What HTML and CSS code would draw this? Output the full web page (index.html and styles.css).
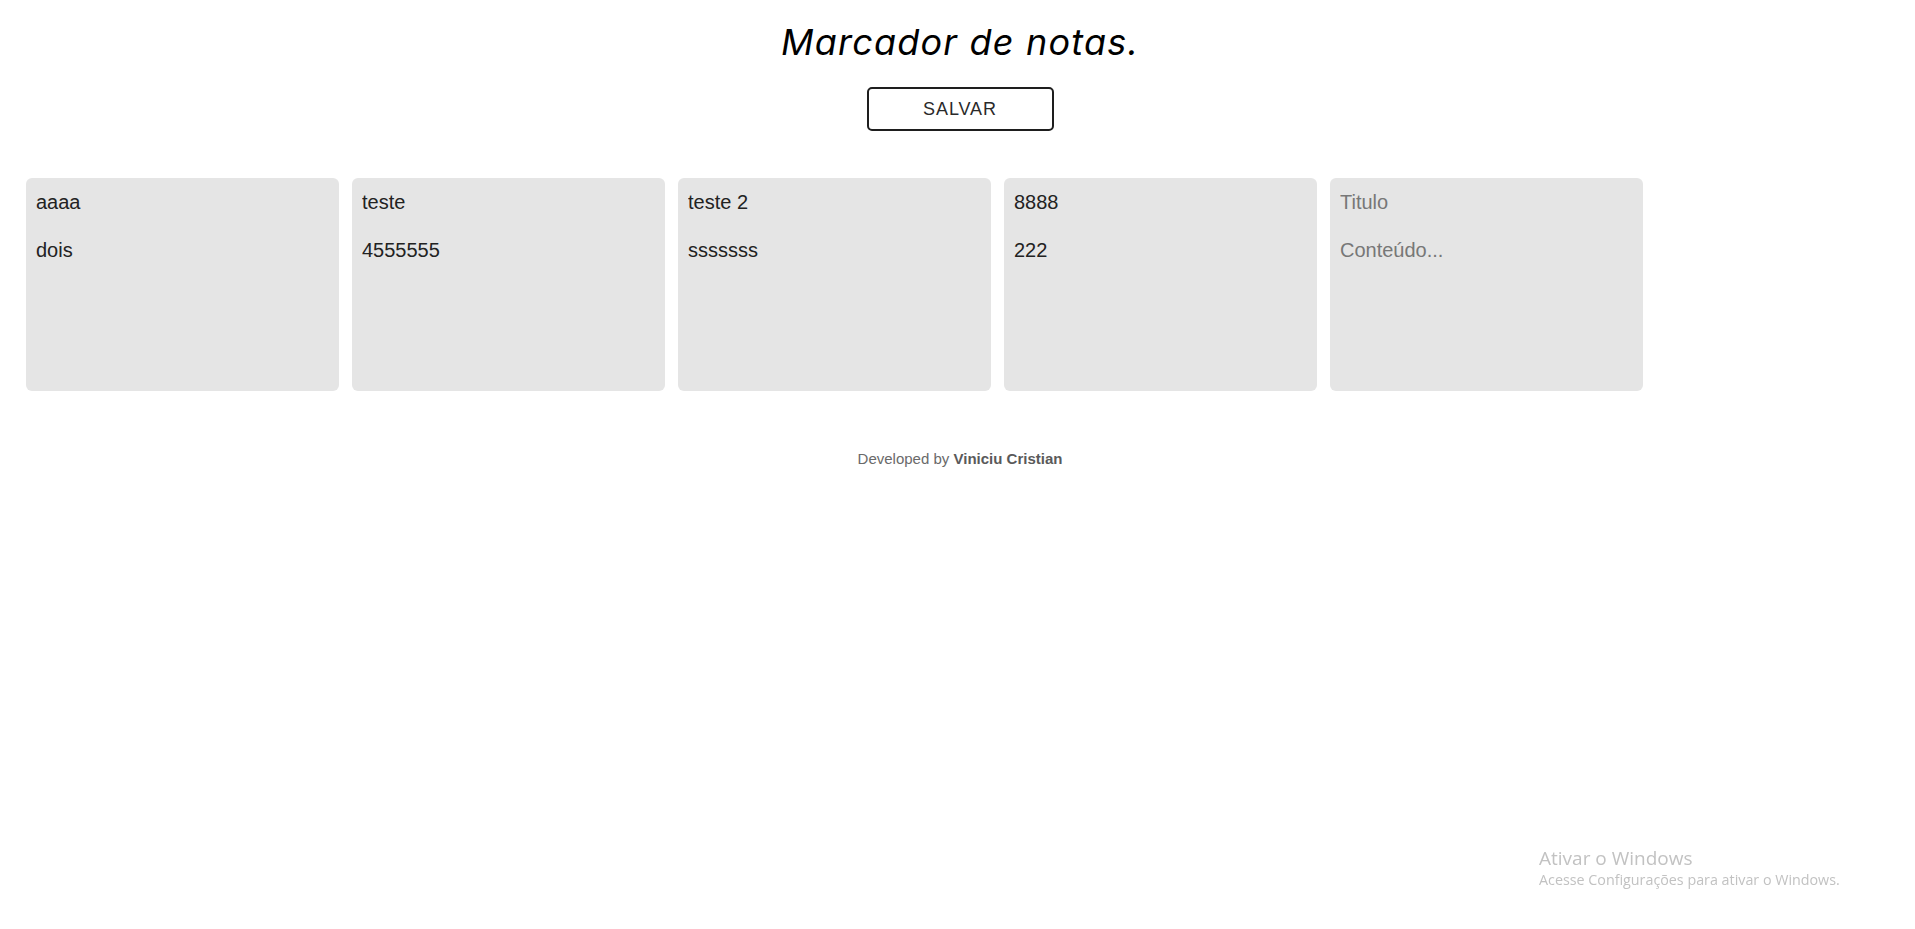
FILE: index.html
```html
<!DOCTYPE html>
<html lang="pt-BR">
<head>
<meta charset="utf-8">
<title>Marcador de notas</title>
<link rel="stylesheet" href="styles.css">
</head>
<body>
<main class="app">
  <h1 class="app-title">Marcador de notas.</h1>
  <button class="save-btn" type="button">SALVAR</button>
  <section class="notes">
    <div class="note">
      <input class="note-title" type="text" value="aaaa" placeholder="Titulo">
      <textarea class="note-body" placeholder="Conteúdo...">dois</textarea>
    </div>
    <div class="note">
      <input class="note-title" type="text" value="teste" placeholder="Titulo">
      <textarea class="note-body" placeholder="Conteúdo...">4555555</textarea>
    </div>
    <div class="note">
      <input class="note-title" type="text" value="teste 2" placeholder="Titulo">
      <textarea class="note-body" placeholder="Conteúdo...">sssssss</textarea>
    </div>
    <div class="note">
      <input class="note-title" type="text" value="8888" placeholder="Titulo">
      <textarea class="note-body" placeholder="Conteúdo...">222</textarea>
    </div>
    <div class="note">
      <input class="note-title" type="text" value="" placeholder="Titulo">
      <textarea class="note-body" placeholder="Conteúdo..."></textarea>
    </div>
  </section>
  <footer class="credits">Developed by <strong>Viniciu Cristian</strong></footer>
</main>
<div class="activate">
  <div class="activate-title">Ativar o Windows</div>
  <div class="activate-sub">Acesse Configurações para ativar o Windows.</div>
</div>
</body>
</html>
```
FILE: styles.css
```css
html, body {
  margin: 0;
  padding: 0;
  background: #ffffff;
}

body {
  font-family: "Liberation Sans", Arial, sans-serif;
  color: #222222;
}

.app {
  display: flex;
  flex-direction: column;
  align-items: center;
  padding: 20px 0 0 5px;
}

.app-title {
  margin: 0;
  font-family: "Inter", "Liberation Sans", sans-serif;
  font-style: italic;
  font-weight: 400;
  font-size: 36px;
  letter-spacing: 1.2px;
  line-height: 44px;
  color: #000;
}

.save-btn {
  margin-top: 23px;
  width: 187px;
  height: 44px;
  border: 2px solid #1e1e1e;
  border-radius: 5px;
  background: #fff;
  font-family: "Liberation Sans", Arial, sans-serif;
  font-size: 18px;
  letter-spacing: 0.9px;
  color: #2a2a2a;
  padding: 0;
  cursor: pointer;
}

.notes {
  align-self: stretch;
  display: flex;
  flex-wrap: wrap;
  gap: 13px;
  padding: 0 21px;
  margin-top: 47px;
}

.note {
  width: 313px;
  height: 213px;
  box-sizing: border-box;
  padding: 12px 10px;
  background: #e5e5e5;
  border-radius: 6px;
  display: flex;
  flex-direction: column;
  gap: 24px;
}

.note-title,
.note-body {
  display: block;
  width: 100%;
  box-sizing: border-box;
  padding: 0;
  margin: 0;
  border: none;
  outline: none;
  background: transparent;
  font-family: "Liberation Sans", Arial, sans-serif;
  font-size: 20px;
  line-height: 24px;
  color: #222;
}

.note-body {
  flex: 1;
  resize: none;
  overflow: hidden;
}

.note-title::placeholder,
.note-body::placeholder {
  color: #777;
}

.credits {
  margin-top: 59px;
  font-size: 15px;
  line-height: 17px;
  color: #6a6a6a;
}

.credits strong {
  color: #5a5a5a;
}

.activate {
  position: fixed;
  left: 1539px;
  top: 846px;
  color: #c2c2c2;
  font-family: "Open Sans", "Noto Sans", sans-serif;
}

.activate-title {
  font-size: 19px;
  line-height: 24px;
}

.activate-sub {
  font-size: 14.3px;
  line-height: 20px;
}
```
